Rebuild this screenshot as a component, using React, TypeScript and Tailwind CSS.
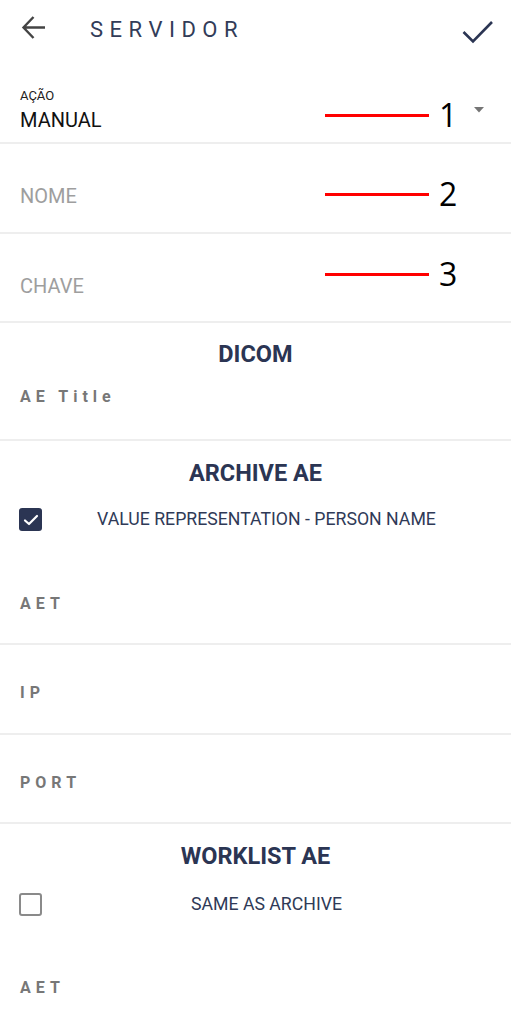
import React from "react";

function Mark({ n, pos }: { n: string; pos: string }) {
  return (
    <div className={`absolute left-[325px] flex items-center ${pos}`}>
      <div className="w-[104px] h-[3px] bg-[#ff0000]" />
      <span className="ml-[10px] text-[32px] leading-none font-['Open_Sans',sans-serif] text-black">
        {n}
      </span>
    </div>
  );
}

function Label({ text, className = "" }: { text: string; className?: string }) {
  return (
    <div
      className={`pl-[20px] text-[16px] leading-none font-bold tracking-[5px] text-[#777777] ${className}`}
    >
      {text}
    </div>
  );
}

function Title({ text }: { text: string }) {
  return (
    <div className="text-center text-[23.5px] leading-none font-bold text-[#2b3553]">
      {text}
    </div>
  );
}

function CheckRow({ checked, text }: { checked: boolean; text: string }) {
  return (
    <div className="flex items-center pl-[19px] pr-[20px] h-[24px]">
      {checked ? (
        <div className="w-[23px] h-[23px] rounded-[3px] bg-[#2b3553] flex items-center justify-center">
          <svg width="16" height="12" viewBox="0 0 16 12">
            <polyline
              points="2,6.5 6,10 14,2"
              fill="none"
              stroke="white"
              strokeWidth="2.2"
              strokeLinecap="round"
              strokeLinejoin="round"
            />
          </svg>
        </div>
      ) : (
        <div className="w-[23px] h-[23px] rounded-[3px] border-2 border-[#8a8a8a]" />
      )}
      <div className="flex-1 text-center text-[17.7px] leading-none text-[#2f3a57]">{text}</div>
    </div>
  );
}

export default function App() {
  return (
    <div className="w-[511px] h-[1024px] overflow-hidden bg-white font-['Roboto',sans-serif]">
      {/* header */}
      <div className="h-[60px] flex items-start pt-[14px] pl-[20px] pr-[17px]">
        <svg width="28" height="28" viewBox="0 0 28 28">
          <path
            d="M3.5 13.5H25M13.5 3L3.5 13.5L13.5 24"
            fill="none"
            stroke="#444444"
            strokeWidth="2.4"
          />
        </svg>
        <span className="ml-[42px] mt-[5px] text-[22px] leading-none tracking-[6.5px] text-[#323c58]">
          SERVIDOR
        </span>
        <svg className="ml-auto mt-[4px]" width="32" height="26" viewBox="0 0 32 26">
          <polyline
            points="1.5,14 11,23.5 30,4"
            fill="none"
            stroke="#2b3553"
            strokeWidth="2.6"
          />
        </svg>
      </div>

      {/* ação */}
      <div className="relative h-[84px] border-b-2 border-[#eeeeee] flex pl-[20px]">
        <div className="pt-[29px]">
          <div className="text-[13px] leading-none text-[#222222]">AÇÃO</div>
          <div className="mt-[8px] text-[20px] leading-none text-[#111111]">MANUAL</div>
        </div>
        <svg className="ml-auto mr-[27px] mt-[47px]" width="10" height="6" viewBox="0 0 10 6">
          <polygon points="0,0 10,0 5,5.5" fill="#757575" />
        </svg>
        <Mark n="1" pos="top-[39px]" />
      </div>

      {/* nome */}
      <div className="relative h-[90px] border-b-2 border-[#eeeeee] pl-[20px] pt-[42px]">
        <div className="text-[20px] leading-none text-[#9e9e9e]">NOME</div>
        <Mark n="2" pos="top-[34px]" />
      </div>

      {/* chave */}
      <div className="relative h-[89px] border-b-2 border-[#eeeeee] pl-[20px] pt-[42px]">
        <div className="text-[20px] leading-none text-[#9e9e9e]">CHAVE</div>
        <Mark n="3" pos="top-[24px]" />
      </div>

      {/* dicom */}
      <div className="h-[118px] border-b-2 border-[#eeeeee] pt-[20px]">
        <Title text="DICOM" />
        <Label text="AE Title" className="mt-[22px]" />
      </div>

      {/* archive */}
      <div className="h-[204px] border-b-2 border-[#eeeeee] pt-[21px]">
        <Title text="ARCHIVE AE" />
        <div className="mt-[22px]">
          <CheckRow checked text="VALUE REPRESENTATION - PERSON NAME" />
        </div>
        <Label text="AET" className="mt-[64px]" />
      </div>

      <div className="h-[90px] border-b-2 border-[#eeeeee] pt-[40px]">
        <Label text="IP" />
      </div>

      <div className="h-[89px] border-b-2 border-[#eeeeee] pt-[40px]">
        <Label text="PORT" />
      </div>

      {/* worklist */}
      <div className="pt-[21px]">
        <Title text="WORKLIST AE" />
        <div className="mt-[24px]">
          <CheckRow checked={false} text="SAME AS ARCHIVE" />
        </div>
        <Label text="AET" className="mt-[63px]" />
      </div>
    </div>
  );
}
